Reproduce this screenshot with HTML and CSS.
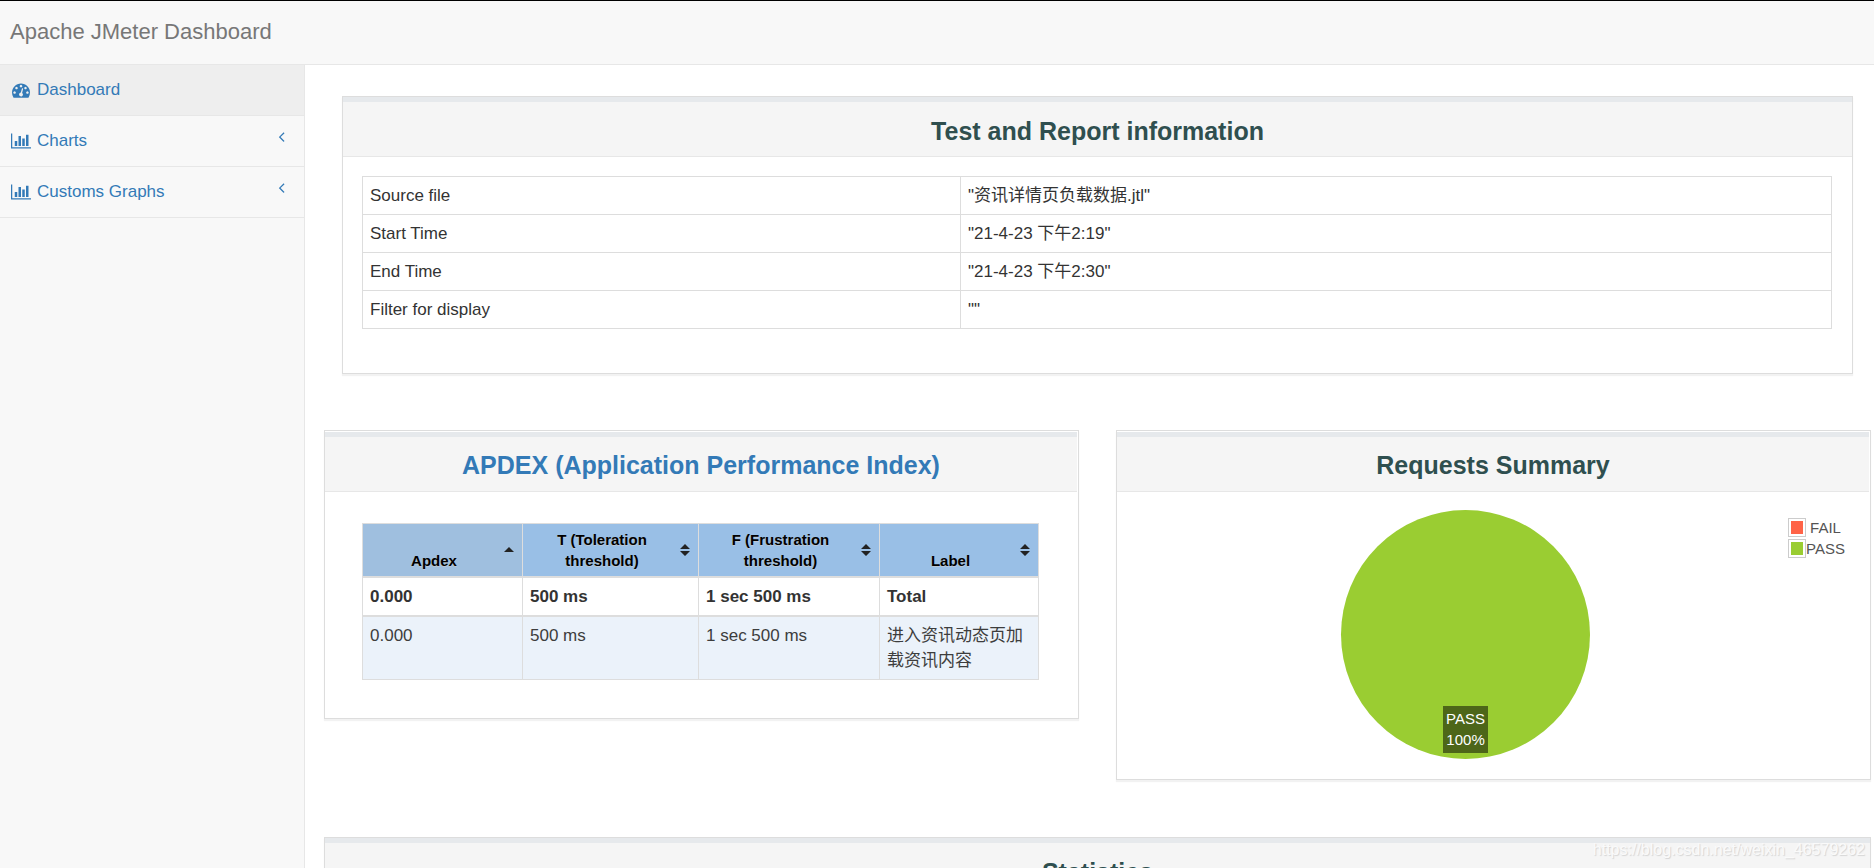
FILE: index.html
```html
<!DOCTYPE html>
<html lang="en">
<head>
<meta charset="utf-8">
<title>Apache JMeter Dashboard</title>
<link rel="stylesheet" href="styles.css">
</head>
<body>
<svg class="defs" aria-hidden="true">
  <symbol id="bars" viewBox="0 0 2048 1792"><path d="M640 896v512H384V896h256zm384-512v1024H768V384h256zm1024 1152v128H0V128h128v1408h1920zm-640-896v768h-256V640h256zm384-384v1152h-256V256h256z"/></symbol>
  <symbol id="angle" viewBox="0 0 640 1792"><path d="M627 544q0 13-10 23l-393 393 393 393q10 10 10 23t-10 23l-50 50q-10 10-23 10t-23-10l-466-466q-10-10-10-23t10-23l466-466q10-10 23-10t23 10l50 50q10 10 10 23z"/></symbol>
  <symbol id="sort" viewBox="0 0 10 12"><path d="M0 5L5 0L10 5zM0 7L5 12L10 7z"/></symbol>
  <symbol id="sort-up" viewBox="0 0 10 12"><path d="M0 8L5 3L10 8z"/></symbol>
</svg>
<header class="navbar"><a class="brand" href="#">Apache JMeter Dashboard</a></header>
<div class="layout">
  <nav class="sidebar">
    <a class="item active" href="#">
      <svg class="icon" viewBox="0 0 1792 1792"><path d="M384 1152q0-53-37.5-90.5t-90.5-37.5-90.5 37.5-37.5 90.5 37.5 90.5 90.5 37.5 90.5-37.5 37.5-90.5zm192-448q0-53-37.5-90.5t-90.5-37.5-90.5 37.5-37.5 90.5 37.5 90.5 90.5 37.5 90.5-37.5 37.5-90.5zm428 481l101-382q6-26-7.5-48.5t-38.5-29.5-48 6.5-30 39.5l-101 382q-60 5-107 43.5t-63 98.5q-20 77 20 146t117 89 146-20 89-117q16-60-6-117t-72-91zm660-33q0-53-37.5-90.5t-90.5-37.5-90.5 37.5-37.5 90.5 37.5 90.5 90.5 37.5 90.5-37.5 37.5-90.5zm-640-640q0-53-37.5-90.5t-90.5-37.5-90.5 37.5-37.5 90.5 37.5 90.5 90.5 37.5 90.5-37.5 37.5-90.5zm448 192q0-53-37.5-90.5t-90.5-37.5-90.5 37.5-37.5 90.5 37.5 90.5 90.5 37.5 90.5-37.5 37.5-90.5zm320 448q0 261-141 483-19 29-54 29h-1402q-35 0-54-29-141-221-141-483 0-182 71-348t191-286 286-191 348-71 348 71 286 191 191 286 71 348z"/></svg>
      <span>Dashboard</span>
    </a>
    <a class="item" href="#"><svg class="icon"><use href="#bars"/></svg><span>Charts</span><svg class="angle"><use href="#angle"/></svg></a>
    <a class="item" href="#"><svg class="icon"><use href="#bars"/></svg><span>Customs Graphs</span><svg class="angle"><use href="#angle"/></svg></a>
  </nav>
  <main class="content">
    <section class="panel info">
      <h2 class="title">Test and Report information</h2>
      <div class="info-body">
        <table class="info-table">
          <colgroup><col class="info-name"><col></colgroup>
          <tbody>
            <tr><td>Source file</td><td>"资讯详情页负载数据.jtl"</td></tr>
            <tr><td>Start Time</td><td>"21-4-23 下午2:19"</td></tr>
            <tr><td>End Time</td><td>"21-4-23 下午2:30"</td></tr>
            <tr><td>Filter for display</td><td>""</td></tr>
          </tbody>
        </table>
      </div>
    </section>
    <div class="row">
      <section class="panel spaced">
        <h2 class="title"><a href="#">APDEX (Application Performance Index)</a></h2>
        <div class="apdex-body">
          <table class="apdex">
            <colgroup><col class="c-apdex"><col class="c-t"><col class="c-f"><col></colgroup>
            <thead>
              <tr>
                <th class="sorted">Apdex<svg class="sort"><use href="#sort-up"/></svg></th>
                <th>T (Toleration threshold)<svg class="sort"><use href="#sort"/></svg></th>
                <th>F (Frustration threshold)<svg class="sort"><use href="#sort"/></svg></th>
                <th>Label<svg class="sort"><use href="#sort"/></svg></th>
              </tr>
            </thead>
            <tbody class="total"><tr><td>0.000</td><td>500 ms</td><td>1 sec 500 ms</td><td>Total</td></tr></tbody>
            <tbody class="samples"><tr><td>0.000</td><td>500 ms</td><td>1 sec 500 ms</td><td>进入资讯动态页加载资讯内容</td></tr></tbody>
          </table>
        </div>
      </section>
      <section class="panel spaced">
        <h2 class="title">Requests Summary</h2>
        <div class="summary">
          <div class="pie"><div class="pie-label">PASS<br>100%</div></div>
          <ul class="legend">
            <li><span class="swatch"><i class="fail"></i></span><span class="key">FAIL</span></li>
            <li><span class="swatch"><i class="pass"></i></span><span class="key">PASS</span></li>
          </ul>
        </div>
      </section>
    </div>
    <section class="panel">
      <h2 class="title">Statistics</h2>
    </section>
  </main>
</div>
<div class="watermark">https://blog.csdn.net/weixin_46579262</div>
</body>
</html>
```
FILE: styles.css
```css
* { box-sizing: border-box; }
body {
  margin: 0;
  height: 100vh;
  overflow: hidden;
  display: flex;
  flex-direction: column;
  background: #fff;
  color: #333;
  font: 17px/25px "Liberation Sans", Arial, "Noto Sans CJK SC", sans-serif;
}
a { color: #337ab7; text-decoration: none; }
.defs { display: none; }

.navbar {
  flex: none;
  border-top: 1px solid #000;
  border-bottom: 1px solid #e7e7e7;
  background: #f8f8f8;
  padding: 18px 10px 20px;
}
.brand { display: block; color: #777; font-size: 22px; }

.layout { flex: 1; display: flex; min-height: 0; }
.sidebar {
  flex: none;
  width: 305px;
  background: #f8f8f8;
  border-right: 1px solid #e7e7e7;
}
.item {
  display: flex;
  align-items: center;
  gap: 6px;
  padding: 12px 19px 13px 11px;
  border-bottom: 1px solid #e7e7e7;
}
.item.active { background: #eee; }
.icon { width: 20px; height: 18px; fill: #337ab7; }
.angle { width: 7px; height: 17px; margin: 0 0 8px auto; fill: #337ab7; }

.content { flex: 1; min-width: 0; padding: 31px 3px 0 19px; }
.panel {
  border: 1px solid #ddd;
  background: #fff;
  box-shadow: 0 2px 1px rgba(0, 0, 0, .05);
}
.info { margin: 0 18px 56px 18px; }
.spaced { padding: 1px 1px 0 0; }
.title {
  margin: 0;
  padding: 15px 0 11px;
  border-top: 5px solid #e6e9ec;
  border-bottom: 1px solid #e7e7e7;
  background: #f5f5f5;
  color: #2f4f4f;
  font-size: 25px;
  line-height: 28px;
  text-align: center;
}
.spaced .title { padding: 14px 0 12px; }
table { width: 100%; border-collapse: collapse; }
td { border: 1px solid #ddd; padding: 6px 7px; vertical-align: top; text-align: left; }
.info-body { padding: 19px 20px 44px 19px; }
.info-name { width: 598px; }

.row {
  display: grid;
  grid-template-columns: 1fr 1fr;
  gap: 37px;
  align-items: start;
  margin-bottom: 57px;
}
.apdex-body { padding: 31px 38px 38px 37px; }
.apdex { table-layout: fixed; }
.c-apdex { width: 160px; }
.c-t { width: 176px; }
.c-f { width: 181px; }
.apdex th {
  position: relative;
  border: 1px solid #ddd;
  border-bottom-width: 2px;
  padding: 5px 22px 5px 5px;
  background: #99bfe6;
  color: #000;
  font-size: 15px;
  line-height: 21px;
  vertical-align: bottom;
  text-shadow: 0 1px 0 rgba(204, 204, 204, .7);
}
.apdex .sorted { background: #9fbfdf; }
.sort {
  position: absolute;
  right: 8px;
  top: 50%;
  width: 10px;
  height: 12px;
  margin-top: -6px;
  fill: #222;
}
.total td { font-weight: bold; border-bottom-width: 2px; }
.samples td { background: #ebf2fa; color: #3d3d3d; }

.summary {
  display: flex;
  align-items: flex-start;
  padding: 18px 24px 20px 26px;
}
.pie {
  width: 249px;
  height: 249px;
  margin: 0 auto;
  border-radius: 50%;
  background: #9acd32;
  display: flex;
  align-items: flex-end;
  justify-content: center;
  padding-bottom: 6px;
}
.pie-label {
  padding: 2px 3px 3px;
  background: rgba(0, 0, 0, .5);
  color: #fff;
  font-size: 15px;
  line-height: 21px;
  text-align: center;
}
.legend {
  list-style: none;
  margin: 7px 0 0;
  padding: 0;
  color: #545454;
  font-size: 15px;
  line-height: 21px;
}
.legend li { display: flex; align-items: center; }
.swatch { border: 1px solid #ccc; padding: 2px; }
.swatch i { display: block; width: 12px; height: 13px; }
.fail { background: #ff6347; }
.pass { background: #9acd32; }
.key { flex: 1; text-align: center; }

.watermark {
  position: absolute;
  right: 9px;
  bottom: 6px;
  color: #fafafa;
  font-size: 16px;
  text-shadow: 1px 1px 1px #d4d4d4;
}
```
